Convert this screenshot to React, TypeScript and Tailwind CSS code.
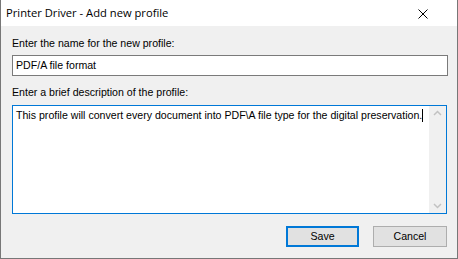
import type { FC } from 'react';

const App: FC = () => {
    return (
        <div className="w-[458px] h-[259px] flex flex-col bg-[#f0f0f0] border border-t-0 border-[#777777] font-['Liberation_Sans',Arial,sans-serif] text-[10.6px] text-black overflow-hidden">
            <div className="h-[26px] bg-white flex items-center justify-between pl-[5px] pr-[29px] shrink-0">
                <span className="text-[11.2px] font-['Open_Sans','Liberation_Sans',sans-serif]">
                    Printer Driver - Add new profile
                </span>
                <svg width="10" height="10" viewBox="0 0 10 10" className="mt-[1px]">
                    <path d="M0.5 0.5 L9.5 9.5 M9.5 0.5 L0.5 9.5" stroke="#000" strokeWidth="1" />
                </svg>
            </div>
            <div className="flex flex-col pl-[11px] pr-[9px] pt-[11px]">
                <label className="leading-[13px]">Enter the name for the new profile:</label>
                <div className="mt-[5px] h-[21px] w-[436px] bg-white border border-[#7a7a7a] pl-[3px] flex items-center">
                    PDF/A file format
                </div>
                <label className="mt-[10px] leading-[13px]">Enter a brief description of the profile:</label>
                <div className="mt-[6px] h-[109px] w-[435px] bg-white border border-[#0078d7] flex">
                    <div className="flex-1 pl-[3px] pt-[3px] leading-[13px] whitespace-nowrap">
                        This profile will convert every document into PDF\A file type for the digital preservation.
                        <span className="inline-block w-px h-[13px] bg-black align-top" />
                    </div>
                    <div className="w-[17px] bg-[#f0f0f0] flex flex-col justify-between items-center py-[4px]">
                        <svg width="9" height="6" viewBox="0 0 9 6">
                            <path d="M1 5 L4.5 1.5 L8 5" fill="none" stroke="#c2c2c2" strokeWidth="1.5" />
                        </svg>
                        <svg width="9" height="6" viewBox="0 0 9 6">
                            <path d="M1 1 L4.5 4.5 L8 1" fill="none" stroke="#c2c2c2" strokeWidth="1.5" />
                        </svg>
                    </div>
                </div>
                <div className="mt-[12px] flex justify-end gap-[14px] pr-[1px]">
                    <button className="w-[73px] h-[21px] bg-[#e1e1e1] border-2 border-[#0078d7] flex items-center justify-center">
                        Save
                    </button>
                    <button className="w-[74px] h-[21px] bg-[#e1e1e1] border border-[#adadad] flex items-center justify-center">
                        Cancel
                    </button>
                </div>
            </div>
        </div>
    );
};

export default App;
